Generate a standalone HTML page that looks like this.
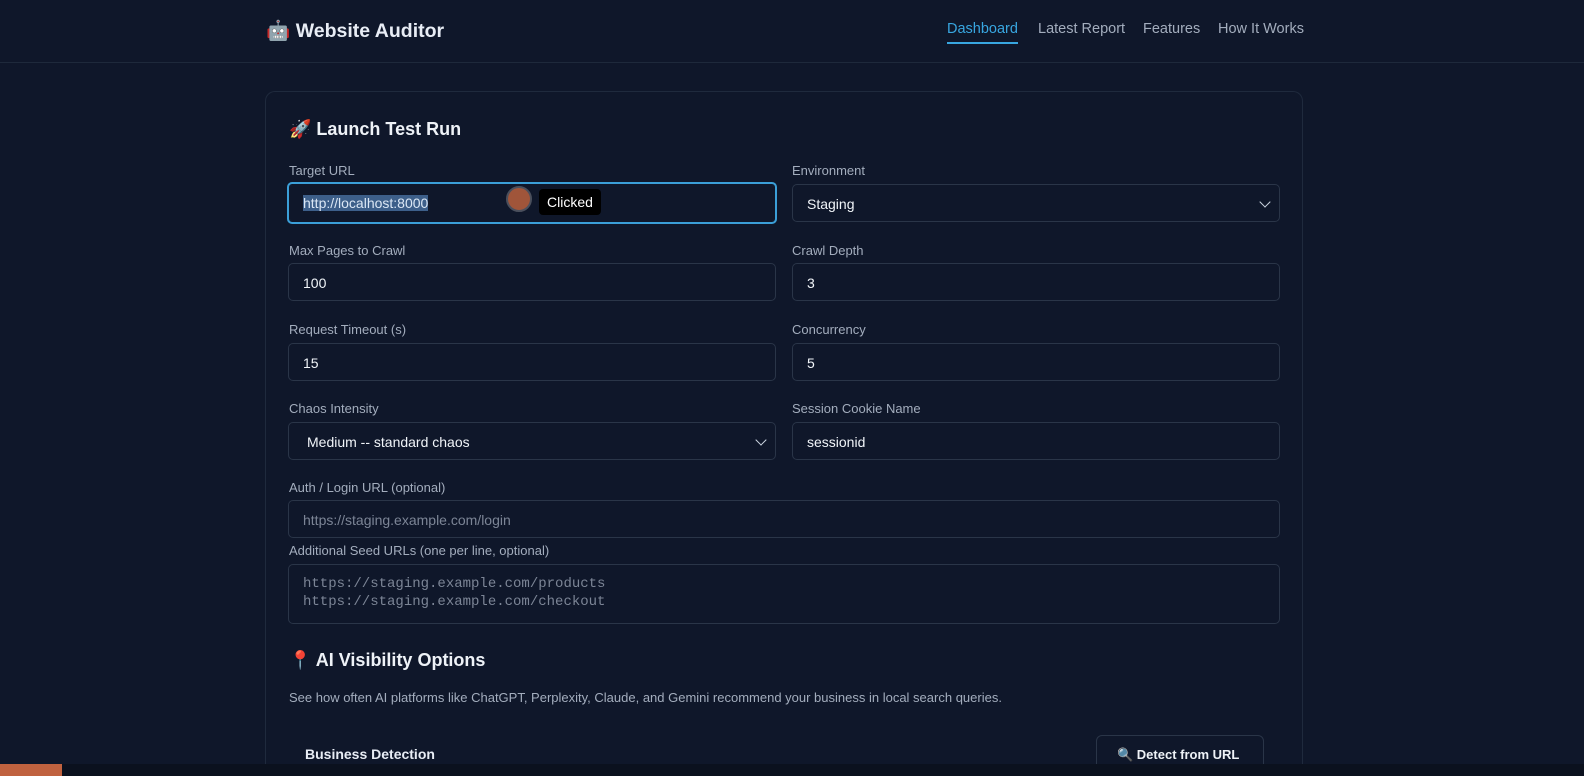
<!DOCTYPE html>
<html><head><meta charset="utf-8"><style>
*{box-sizing:border-box;margin:0;padding:0}
html,body{width:1584px;height:776px;overflow:hidden}
body{background:#0f172a;font-family:"Liberation Sans",sans-serif;color:#e2e8f0;position:relative}
.hdr{position:absolute;left:0;top:0;width:1584px;height:63px;border-bottom:1px solid #1e293b}
.logo{position:absolute;left:266px;top:19px;font-size:19.5px;font-weight:bold;color:#e8edf5}
.nav{position:absolute;top:21px;font-size:14.5px;color:#a3adbd}
.card{position:absolute;left:265px;top:91px;width:1038px;height:685px;border:1px solid #1f2a3d;border-bottom:none;border-radius:10px 10px 0 0;background:#0f172a}
.h2{position:absolute;font-size:18px;font-weight:bold;color:#eef2f7}
.lbl{position:absolute;font-size:13px;color:#a3adbd}
.in{position:absolute;height:38px;border:1px solid #2a3548;border-radius:5px;background:#0f172a;font-size:14px;color:#f1f5f9;padding:11px 14px}
.chev{position:absolute;right:10px;top:13px;width:8px;height:8px;border-right:1.5px solid #cbd5e1;border-bottom:1.5px solid #cbd5e1;transform:rotate(45deg)}
</style></head><body>
<div class="hdr">
<div class="logo">🤖 Website Auditor</div>
<div class="nav" style="left:947px;color:#38a6e0">Dashboard<div style="height:2px;background:#38a6e0;margin-top:5px"></div></div>
<div class="nav" style="left:1038px">Latest Report</div>
<div class="nav" style="left:1143px">Features</div>
<div class="nav" style="left:1218px">How It Works</div>
</div>
<div class="card"></div>
<div class="h2" style="left:289px;top:119px">🚀 Launch Test Run</div>
<div class="lbl" style="left:289px;top:163px">Target URL</div>
<div class="in" style="left:287px;top:182px;width:490px;height:42px;border:2px solid #3b9fd8;box-shadow:0 0 0 1px #0f172a inset,0 0 0 1px #1e4e6e inset;padding:11px 14px"><span style="background:#3d5f8a;color:#dbe7f5">http://localhost:8000</span></div>
<div style="position:absolute;left:506px;top:186px;width:26px;height:26px;border-radius:50%;background:#a0553a;border:2px solid #4a4f5c"></div>
<div style="position:absolute;left:539px;top:189px;padding:5px 8px;background:#000;border-radius:4px;font-size:14px;color:#fff">Clicked</div>
<div class="lbl" style="left:792px;top:163px">Environment</div>
<div class="in" style="left:792px;top:184px;width:488px">Staging<div class="chev"></div></div>
<div class="lbl" style="left:289px;top:243px">Max Pages to Crawl</div>
<div class="in" style="left:288px;top:263px;width:488px">100</div>
<div class="lbl" style="left:792px;top:243px">Crawl Depth</div>
<div class="in" style="left:792px;top:263px;width:488px">3</div>
<div class="lbl" style="left:289px;top:322px">Request Timeout (s)</div>
<div class="in" style="left:288px;top:343px;width:488px">15</div>
<div class="lbl" style="left:792px;top:322px">Concurrency</div>
<div class="in" style="left:792px;top:343px;width:488px">5</div>
<div class="lbl" style="left:289px;top:401px">Chaos Intensity</div>
<div class="in" style="left:288px;top:422px;width:488px;padding-left:18px">Medium -- standard chaos<div class="chev"></div></div>
<div class="lbl" style="left:792px;top:401px">Session Cookie Name</div>
<div class="in" style="left:792px;top:422px;width:488px">sessionid</div>
<div class="lbl" style="left:289px;top:480px">Auth / Login URL (optional)</div>
<div class="in" style="left:288px;top:500px;width:992px;color:#7c8596">https://staging.example.com/login</div>
<div class="lbl" style="left:289px;top:543px">Additional Seed URLs (one per line, optional)</div>
<div class="in" style="left:288px;top:564px;width:992px;height:60px;font-family:'Liberation Mono',monospace;color:#7c8596;line-height:18px;padding:10px 14px">https://staging.example.com/products<br>https://staging.example.com/checkout</div>
<div class="h2" style="left:289px;top:650px">📍 AI Visibility Options</div>
<div class="lbl" style="left:289px;top:690px">See how often AI platforms like ChatGPT, Perplexity, Claude, and Gemini recommend your business in local search queries.</div>
<div style="position:absolute;left:305px;top:746px;font-size:14px;font-weight:bold;color:#e8edf5">Business Detection</div>
<div style="position:absolute;left:1096px;top:735px;width:168px;height:40px;border:1px solid #2a3548;border-radius:6px;font-size:13px;font-weight:bold;padding:11px 0 0 20px;color:#eef2f7">🔍 Detect from URL</div>
<div style="position:absolute;left:0;top:764px;width:1584px;height:12px;background:#0b111e"></div>
<div style="position:absolute;left:0;top:764px;width:62px;height:12px;background:#c0623f"></div>
</body></html>
